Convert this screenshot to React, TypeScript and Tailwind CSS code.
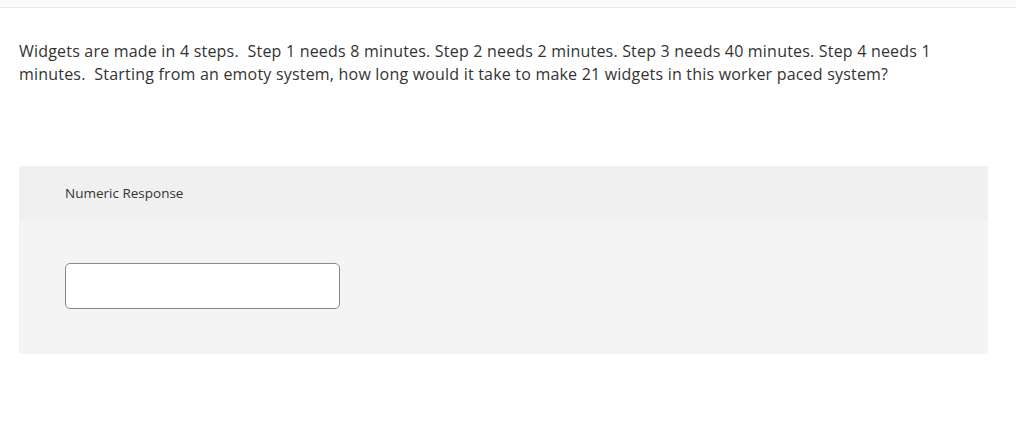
export default function App() {
  return (
    <div className="min-h-[429px] bg-white" style={{ fontFamily: '"Open Sans", Lato, sans-serif' }}>
      <div className="h-[8px] bg-[#fafafa] border-b border-[#ececec]" />
      <div className="px-[19px] pt-[32px]">
        <p className="text-[16px] leading-[23px] tracking-[0.2px] text-[#333] max-w-[945px]">
          Widgets are made in 4 steps.&nbsp; Step 1 needs 8 minutes. Step 2 needs 2 minutes. Step 3 needs 40 minutes. Step 4 needs 1 minutes.&nbsp; Starting from an emoty system, how long would it take to make 21 widgets in this worker paced system?
        </p>
        <div className="mt-[80px] w-[969px] rounded-[3px] overflow-hidden">
          <div className="h-[55px] bg-[#f0f0f0] flex items-center px-[46px]">
            <span className="text-[13.5px] text-[#333]">Numeric Response</span>
          </div>
          <div className="h-[133px] bg-[#f4f4f4] px-[46px] pt-[42px]">
            <input
              type="text"
              className="w-[275px] h-[46px] bg-white border border-[#8a8a8a] rounded-[5px] outline-none px-2"
            />
          </div>
        </div>
      </div>
    </div>
  );
}
